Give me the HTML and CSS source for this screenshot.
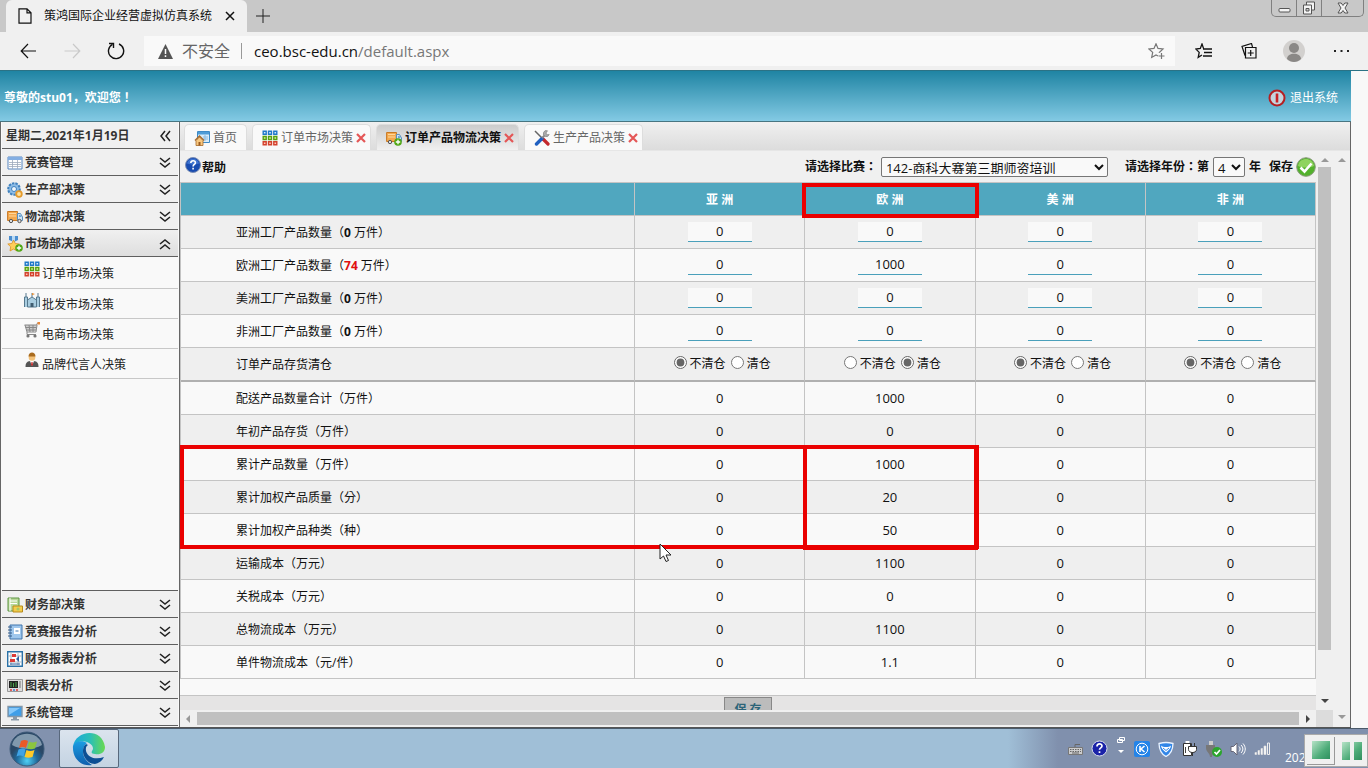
FILE: index.html
```html
<!DOCTYPE html>
<html lang="zh-CN">
<head>
<meta charset="utf-8">
<title>策鸿国际企业经营虚拟仿真系统</title>
<link rel="stylesheet" href="styles.css">
</head>
<body>
<svg class="defs" aria-hidden="true">
  <defs>
    <symbol id="down" viewBox="0 0 12 12"><path d="M1 1l5 4 5-4M1 6l5 4 5-4" fill="none" stroke="#222" stroke-width="1.6"/></symbol>
    <symbol id="up" viewBox="0 0 12 12"><path d="M1 6l5-4 5 4M1 11l5-4 5 4" fill="none" stroke="#222" stroke-width="1.6"/></symbol>
    <symbol id="left" viewBox="0 0 12 12"><path d="M6 1L2 6l4 5M11 1L7 6l4 5" fill="none" stroke="#222" stroke-width="1.5"/></symbol>
    <symbol id="close" viewBox="0 0 10 10"><path d="M1 1l8 8M9 1L1 9" stroke="#e45656" stroke-width="2.2"/></symbol>
    <symbol id="grid" viewBox="0 0 16 16"><g fill="#d5e9ff" stroke="#1f78c8" stroke-width="1.4"><path d="M1.2 1.2h3v3h-3zM6.5 1.2h3v3h-3zM11.8 1.2h3v3h-3z"/></g><g fill="#d7f3a5" stroke="#56a010" stroke-width="1.4"><path d="M1.2 6.5h3v3h-3zM6.5 6.5h3v3h-3zM11.8 6.5h3v3h-3z"/></g><g fill="#ffc5b8" stroke="#d3412c" stroke-width="1.4"><path d="M1.2 11.8h3v3h-3zM6.5 11.8h3v3h-3zM11.8 11.8h3v3h-3z"/></g></symbol>
    <symbol id="truck" viewBox="0 0 16 16"><path d="M.6 2.500h9.900v9H.6z" fill="#f4a94e" stroke="#c97822"/><path d="M2 4.500h7M2 7h7" stroke="#ffd79c"/><path d="M10.500 4.500h3l2 3.500v3.500h-5z" fill="#cfe3f4" stroke="#5a8fbd"/><path d="M12 6h1.500l1 2H12z" fill="#6aa7d8"/><circle cx="4" cy="12" r="1.700" fill="#ddd" stroke="#555"/><circle cx="12.500" cy="12" r="1.700" fill="#ddd" stroke="#555"/></symbol>
    <symbol id="plus" viewBox="0 0 8 8"><circle cx="4" cy="4" r="3.800" fill="#4fa612"/><path d="M4 1.800v4.400M1.800 4h4.400" stroke="#fff" stroke-width="1.300"/></symbol>
  </defs>
</svg>

<header class="browser">
  <div class="tabstrip">
    <div class="btab">
      <svg width="14" height="16" viewBox="0 0 14 16"><path d="M1 .8h8l4 4v10.400H1zM9 .8v4h4" fill="none" stroke="#111" stroke-width="1.200"/></svg>
      <span class="btitle">策鸿国际企业经营虚拟仿真系统</span>
      <button class="plain" aria-label="关闭标签页"><svg width="10" height="10" viewBox="0 0 10 10"><path d="M1 1l8 8M9 1L1 9" stroke="#111" stroke-width="1.500"/></svg></button>
    </div>
    <button class="plain newtab" aria-label="新建标签页"><svg width="14" height="14" viewBox="0 0 14 14"><path d="M7 0v14M0 7h14" stroke="#222"/></svg></button>
    <div class="winbtns">
      <button aria-label="最小化"><svg width="13" height="12" viewBox="0 0 13 12"><rect x="1" y="6.500" width="11" height="3.500" rx="1" fill="#f4f4f4" stroke="#555"/></svg></button>
      <button aria-label="还原"><svg width="14" height="14" viewBox="0 0 14 14"><path d="M4.500 1h8v8h-8z" fill="#f4f4f4" stroke="#555"/><path d="M1.500 4h8v9h-8z" fill="#f4f4f4" stroke="#555"/><path d="M4 7.500h3v2.500H4z" fill="#ccc" stroke="#555"/></svg></button>
      <button class="wide" aria-label="关闭"><svg width="12" height="12" viewBox="0 0 12 12"><path d="M1 1h3.200L6 3.500 7.800 1H11L8 6l3 5H7.800L6 8.500 4.200 11H1l3-5z" fill="#f4f4f4" stroke="#555"/></svg></button>
    </div>
  </div>
  <div class="navbar">
    <button class="plain nav1" aria-label="后退"><svg width="17" height="16" viewBox="0 0 17 16"><path d="M16 8H1.500M8 1L1.200 8 8 15" fill="none" stroke="#111" stroke-width="1.200"/></svg></button>
    <button class="plain nav2" aria-label="前进"><svg width="17" height="16" viewBox="0 0 17 16"><path d="M.5 8h15M9 1l6.800 7L9 15" fill="none" stroke="#c9c9c9" stroke-width="1.200"/></svg></button>
    <button class="plain nav3" aria-label="刷新"><svg width="18" height="18" viewBox="0 0 18 18"><path d="M5.500 2.300A7.600 7.600 0 1 0 12 2" fill="none" stroke="#111" stroke-width="1.400"/><path d="M2 1.500h4.500V6" fill="none" stroke="#111" stroke-width="1.400"/></svg></button>
    <div class="address">
      <svg width="15" height="15" viewBox="0 0 15 15"><path d="M7.500 0L15 15H0z" fill="#555"/><path d="M7.500 5v5M7.500 11.300v1.700" stroke="#fff" stroke-width="1.500"/></svg>
      <span class="insecure">不安全</span><span class="bar"></span>
      <span class="url">ceo.bsc-edu.cn<i>/default.aspx</i></span>
      <svg class="fav" width="17" height="16" viewBox="0 0 17 16"><path d="M12 9.500l-.5-.2L15 6l-5-.6L8 .8 6 5.400l-5 .6 3.700 3.400-1 5L8 12l2 1M13.500 10v6M10.500 13h6" fill="none" stroke="#777" stroke-width="1.200"/></svg>
    </div>
    <div class="tools">
      <svg width="17" height="16" viewBox="0 0 17 16"><path d="M8 5.400h.5L7 1 5.300 5.400 .8 6l3.400 3.400-1 5L7 12M8 6h9M9 9.500h8M8 13h9" fill="none" stroke="#111" stroke-width="1.300"/></svg>
      <svg width="16" height="16" viewBox="0 0 16 16"><path d="M4.500 4.500h10.500v10.500H4.500zM9.700 7v6M6.700 10h6M4 12.500L1 3.500l9.500-3L11.500 4" fill="none" stroke="#111" stroke-width="1.200"/></svg>
      <svg width="22" height="22" viewBox="0 0 22 22"><circle cx="11" cy="11" r="11" fill="#d2d0ce"/><circle cx="11" cy="8" r="5" fill="#8a8886"/><path d="M4 19c0-7 14-7 14 0-4 4-10 4-14 0" fill="#8a8886"/></svg>
      <svg width="15" height="4" viewBox="0 0 15 4"><path d="M0 1h2v2H0zM6.500 1h2v2h-2zM13 1h2v2h-2z" fill="#222"/></svg>
    </div>
  </div>
</header>

<div class="page">
  <div class="banner">
    <strong>尊敬的stu01，欢迎您<span class="mid">！</span></strong>
    <a href="#"><svg width="18" height="18" viewBox="0 0 18 18"><circle cx="9" cy="9" r="7.500" fill="#c4d3dc" stroke="#b51f22" stroke-width="2"/><path d="M9 4.500v9" stroke="#c92125" stroke-width="2.600"/></svg><span>退出系统</span></a>
  </div>
  <div class="workspace">
    <nav class="sidebar">
      <div class="date"><span>星期二,2021年1月19日</span><svg width="12" height="12"><use href="#left"/></svg></div>
      <button class="group"><svg width="16" height="16" viewBox="0 0 16 16"><path d="M1 2h14v12H1z" fill="#fff" stroke="#5686c0"/><path d="M1 2h14v3H1z" fill="#83aee2"/><path d="M2 7.500h12M2 9.500h12M2 11.500h12M5.500 5v9M10.500 5v9" stroke="#9daabb" stroke-width=".8"/></svg><span>竞赛管理</span><svg width="12" height="12"><use href="#down"/></svg></button>
      <button class="group"><svg width="16" height="16" viewBox="0 0 16 16"><circle cx="7" cy="7" r="5.800" fill="#8dbce6" stroke="#3f80bd" stroke-width="2" stroke-dasharray="2.500 1"/><circle cx="7" cy="7" r="2.500" fill="#eef6fc" stroke="#3f80bd"/><circle cx="12" cy="12" r="2.800" fill="#ffe1a0" stroke="#e59b2b" stroke-width="1.800"/></svg><span>生产部决策</span><svg width="12" height="12"><use href="#down"/></svg></button>
      <button class="group"><svg width="16" height="16"><use href="#truck"/></svg><span>物流部决策</span><svg width="12" height="12"><use href="#down"/></svg></button>
      <button class="group open"><svg width="16" height="16" viewBox="0 0 16 16"><path d="M2 0h9v4L7 6 2 4z" fill="#4b8ed0"/><path d="M5 0h3v5H5z" fill="#b8d9f4"/><path d="M6.500 4l1.800 3.500 4 .5-3 2.800.8 4.200-3.600-2L3 15l.7-4.200L.8 8l4-.5z" fill="#ffce59" stroke="#dc9122" stroke-width=".8"/><use href="#plus" x="8" y="8" width="8" height="8"/></svg><span>市场部决策</span><svg width="12" height="12"><use href="#up"/></svg></button>
      <ul class="submenu">
        <li><svg width="16" height="16"><use href="#grid"/></svg><a href="#">订单市场决策</a></li>
        <li><svg width="16" height="16" viewBox="0 0 16 16"><path d="M.5 15V5h3v10M12.500 15V5h3v10M3.500 15V8l4.500-3 4.500 3v7z" fill="#a9cde0" stroke="#56788d"/><path d="M6.500 15v-4h3v4z" fill="#405d70"/><path d="M2 5V1M14 5V1M8 5V1" stroke="#56788d"/><path d="M8 1l3 1-3 1.200z" fill="#e58c32"/></svg><a href="#">批发市场决策</a></li>
        <li><svg width="16" height="16" viewBox="0 0 16 16"><path d="M1 3h12l-1.500 6H3z" fill="#ccc"/><path d="M.5 3h12l1-2H16M1 3l2 7h9l1-7M3 10v2.500h9M1.500 5.500h11M2 8h10M5 3l1 7M9 3v7" fill="none" stroke="#888"/><circle cx="4" cy="14" r="1.600" fill="#777"/><circle cx="11" cy="14" r="1.600" fill="#777"/><path d="M13.500 0H16v2.500h-2.500z" fill="#e7883b"/></svg><a href="#">电商市场决策</a></li>
        <li><svg width="16" height="16" viewBox="0 0 16 16"><path d="M1.500 15c0-5 2-6 6.500-6s6.500 1 6.500 6z" fill="#555"/><path d="M6 9h4l-2 5z" fill="#fff"/><path d="M7.500 10h1l.5 3-1 1-1-1z" fill="#c62626"/><circle cx="8" cy="5.500" r="3.300" fill="#f3c27a"/><path d="M4.500 4.500C4.500-1 11.500-1 11.500 4.500z" fill="#a96b1e"/></svg><a href="#">品牌代言人决策</a></li>
      </ul>
      <div class="bottom">
        <button class="group"><svg width="16" height="16" viewBox="0 0 16 16"><path d="M1 1h11v13H1z" fill="#b8d99a" stroke="#5c9440"/><path d="M3 4h7M3 6.500h7M3 1v13" stroke="#fff"/><path d="M6 9h9.500v6H6z" fill="#f3cd4c" stroke="#b98b1c"/><circle cx="11" cy="12" r="1.500" fill="#a9c963"/></svg><span>财务部决策</span><svg width="12" height="12"><use href="#down"/></svg></button>
        <button class="group"><svg width="16" height="16" viewBox="0 0 16 16"><path d="M3 1h12v14H3z" fill="#9fc7ed" stroke="#3f74ad"/><path d="M7 4h6v6H7z" fill="#fff"/><path d="M8.500 7h3" stroke="#3f74ad"/><path d="M1 3h4M1 6h4M1 9h4M1 12h4" stroke="#345a86"/></svg><span>竞赛报告分析</span><svg width="12" height="12"><use href="#down"/></svg></button>
        <button class="group"><svg width="16" height="16" viewBox="0 0 16 16"><path d="M.7.7h14.600v14.600H.7z" fill="#fff" stroke="#2a72a8" stroke-width="1.400"/><path d="M4 1v14M11 1v14M1 5h14M1 11h14" stroke="#a9b7c5"/><path d="M5 3h4v3H5zM3 8h5v3H3z" fill="#dc3a36"/><path d="M9 8l3-3v6z" fill="#2d5f9d"/><path d="M3 13h10" stroke="#2d5f9d"/></svg><span>财务报表分析</span><svg width="12" height="12"><use href="#down"/></svg></button>
        <button class="group"><svg width="16" height="16" viewBox="0 0 16 16"><path d="M.5 1.500h15v12H.5z" fill="#ddd" stroke="#999"/><path d="M2 3h9v7H2z" fill="#222"/><path d="M4 4v5M6.500 5v4M9 4v5" stroke="#49a34b"/><path d="M13 3v7" stroke="#777"/><path d="M3 12h2M9 12h2" stroke="#d33" stroke-width="1.500"/><path d="M6 12h2" stroke="#37c" stroke-width="1.500"/></svg><span>图表分析</span><svg width="12" height="12"><use href="#down"/></svg></button>
        <button class="group"><svg width="16" height="16" viewBox="0 0 16 16"><path d="M1 1.500h14v10H1z" fill="#3f9ee8" stroke="#8497a8" stroke-width="1.400"/><path d="M2 10V3h11z" fill="#86c8fa"/><path d="M6 12h4v2h2v1.500H4V14h2z" fill="#8999a8"/></svg><span>系统管理</span><svg width="12" height="12"><use href="#down"/></svg></button>
      </div>
    </nav>

    <main class="content">
      <div class="tabs">
        <button class="tab"><svg width="16" height="16" viewBox="0 0 16 16"><path d="M3.500 1.500h12v11h-12z" fill="#d8ecfb" stroke="#3e8ac6"/><path d="M4 2h11v2.500H4z" fill="#4f9cd7"/><path d="M9 7h5M9 9h5M11 5v6" stroke="#8dbbe0"/><path d="M1 10.500L5.500 6l4.500 4.500" fill="none" stroke="#a66a2c" stroke-width="1.500"/><path d="M2 10.500L5.500 7 9 10.500v5H2z" fill="#f7c77f" stroke="#a66a2c" stroke-width=".8"/><path d="M4.500 12h2v3.500h-2z" fill="#9b5a20"/></svg><span>首页</span></button>
        <button class="tab closable"><svg width="16" height="16"><use href="#grid"/></svg><span>订单市场决策</span><svg width="10" height="10"><use href="#close"/></svg></button>
        <button class="tab closable active"><svg width="16" height="16" viewBox="0 0 16 16"><use href="#truck" width="16" height="16"/><use href="#plus" x="8" y="8" width="8" height="8"/></svg><span>订单产品物流决策</span><svg width="10" height="10"><use href="#close"/></svg></button>
        <button class="tab closable"><svg width="16" height="16" viewBox="0 0 16 16"><path d="M1 1l7 7" stroke="#666" stroke-width="1.500"/><path d="M9 9l5 5" stroke="#c3272b" stroke-width="3.200" stroke-linecap="round"/><path d="M2.500 14L8 8.500" stroke="#1f5fc0" stroke-width="3.400" stroke-linecap="round"/><path d="M8 8l3.500-3.500" stroke="#888" stroke-width="1.800"/><path d="M13.500.8a3 3 0 1 0 1.700 3.700L13 4.800 12 3z" fill="#aaa" stroke="#777" stroke-width=".6"/></svg><span>生产产品决策</span><svg width="10" height="10"><use href="#close"/></svg></button>
      </div>
      <div class="frame">
        <div class="pane">
          <div class="filters">
            <button class="plain help"><svg width="16" height="16" viewBox="0 0 16 16"><circle cx="8" cy="8" r="7.500" fill="#184cb0" stroke="#7c8fb5"/><path d="M2 6.500C3 0 13 0 14 6.500 10 8 6 8 2 6.500" fill="#3f74cf"/><path d="M5.800 6c0-3 4.600-3 4.600-.3 0 1.800-2.300 1.800-2.300 3.800M8.100 10.800v1.700" fill="none" stroke="#fff" stroke-width="1.600"/></svg><span>帮助</span></button>
            <label class="l1" for="match">请选择比赛<span class="mid">：</span></label>
            <select id="match"><option>142-商科大赛第三期师资培训</option></select>
            <label class="l2" for="year">请选择年份<span class="mid">：</span>第</label>
            <select id="year"><option>4</option></select>
            <span class="unit">年</span>
            <button class="plain save"><span>保存</span><svg width="20" height="20" viewBox="0 0 20 20"><circle cx="10" cy="10" r="9.300" fill="#52b12c" stroke="#8a9a7c"/><path d="M2 9C3-.5 17-.5 18 9 13 11 7 11 2 9" fill="#8fd35f"/><path d="M4.500 10.500l4 4 7-8" fill="none" stroke="#fff" stroke-width="2.600"/></svg></button>
          </div>
          <table class="grid">
            <thead><tr><th></th><th>亚 洲</th><th class="flag">欧 洲</th><th>美 洲</th><th>非 洲</th></tr></thead>
            <tbody>
              <tr><td>亚洲工厂产品数量（<b>0</b> 万件）</td><td><input type="text" aria-label="亚洲工厂到亚洲" value="0"></td><td><input type="text" aria-label="亚洲工厂到欧洲" value="0"></td><td><input type="text" aria-label="亚洲工厂到美洲" value="0"></td><td><input type="text" aria-label="亚洲工厂到非洲" value="0"></td></tr>
              <tr><td>欧洲工厂产品数量（<b class="red">74</b> 万件）</td><td><input type="text" aria-label="欧洲工厂到亚洲" value="0"></td><td><input type="text" aria-label="欧洲工厂到欧洲" value="1000"></td><td><input type="text" aria-label="欧洲工厂到美洲" value="0"></td><td><input type="text" aria-label="欧洲工厂到非洲" value="0"></td></tr>
              <tr><td>美洲工厂产品数量（<b>0</b> 万件）</td><td><input type="text" aria-label="美洲工厂到亚洲" value="0"></td><td><input type="text" aria-label="美洲工厂到欧洲" value="0"></td><td><input type="text" aria-label="美洲工厂到美洲" value="0"></td><td><input type="text" aria-label="美洲工厂到非洲" value="0"></td></tr>
              <tr><td>非洲工厂产品数量（<b>0</b> 万件）</td><td><input type="text" aria-label="非洲工厂到亚洲" value="0"></td><td><input type="text" aria-label="非洲工厂到欧洲" value="0"></td><td><input type="text" aria-label="非洲工厂到美洲" value="0"></td><td><input type="text" aria-label="非洲工厂到非洲" value="0"></td></tr>
              <tr class="stock"><td>订单产品存货清仓</td>
                <td><div class="radios"><label><input type="radio" name="asia" checked>不清仓</label><label><input type="radio" name="asia">清仓</label></div></td>
                <td><div class="radios"><label><input type="radio" name="europe">不清仓</label><label><input type="radio" name="europe" checked>清仓</label></div></td>
                <td><div class="radios"><label><input type="radio" name="america" checked>不清仓</label><label><input type="radio" name="america">清仓</label></div></td>
                <td><div class="radios"><label><input type="radio" name="africa" checked>不清仓</label><label><input type="radio" name="africa">清仓</label></div></td></tr>
            </tbody>
            <tbody class="alt">
              <tr><td>配送产品数量合计（万件）</td><td>0</td><td>1000</td><td>0</td><td>0</td></tr>
              <tr><td>年初产品存货（万件）</td><td>0</td><td>0</td><td>0</td><td>0</td></tr>
            </tbody>
            <tbody class="alt flagged">
              <tr><td class="flag-row">累计产品数量（万件）</td><td>0</td><td class="flag-col">1000</td><td>0</td><td>0</td></tr>
              <tr><td>累计加权产品质量（分）</td><td>0</td><td>20</td><td>0</td><td>0</td></tr>
              <tr><td>累计加权产品种类（种）</td><td>0</td><td>50</td><td>0</td><td>0</td></tr>
            </tbody>
            <tbody>
              <tr><td>运输成本（万元）</td><td>0</td><td>1100</td><td>0</td><td>0</td></tr>
              <tr><td>关税成本（万元）</td><td>0</td><td>0</td><td>0</td><td>0</td></tr>
              <tr><td>总物流成本（万元）</td><td>0</td><td>1100</td><td>0</td><td>0</td></tr>
              <tr><td>单件物流成本（元/件）</td><td>0</td><td>1.1</td><td>0</td><td>0</td></tr>
            </tbody>
          </table>
          <div class="actions"><button>保 存</button></div>
        </div>
        <div class="vbar"><i class="arrow up dim"></i><i class="thumb"></i><i class="arrow down"></i></div>
        <div class="hbar"><i class="arrow west dim"></i><i class="thumb"></i><i class="arrow east"></i></div>
        <div class="corner"></div>
        <div class="vbar outer"><i class="arrow up dim"></i><i class="arrow down dim"></i></div>
      </div>
    </main>
  </div>
</div>

<footer class="taskbar">
  <button class="plain start" aria-label="开始"><svg width="36" height="36" viewBox="0 0 36 36"><defs><radialGradient id="orb" cy=".85"><stop offset="0" stop-color="#4fd0f5"/><stop offset=".6" stop-color="#1f6a9c"/><stop offset="1" stop-color="#2a4866"/></radialGradient></defs><circle cx="18" cy="18" r="17" fill="url(#orb)" stroke="#3d5a78"/><path d="M3 14C6-1 30-1 33 14 24 19 12 19 3 14" fill="#c9dce8" opacity=".55"/><path d="M12 10c3-1.500 5-1 7 0l-2 7c-2-1-4-1.500-7 0z" fill="#ea5a28"/><path d="M20 10.500c3 1.500 5 1 8 0l-2 7c-3 1-5 1-8 0z" fill="#8cc63f"/><path d="M9.500 18.500c3-1.500 5-1 7 0l-2 7c-2-1-4-1.500-7 0z" fill="#3fa3e6"/><path d="M17.500 19c3 1.500 5 1 8 0l-2 7c-3 1-5 1-8 0z" fill="#fdc928"/></svg></button>
  <button class="edge" aria-label="Microsoft Edge"><svg width="34" height="34" viewBox="0 0 34 34"><defs><linearGradient id="eg"><stop offset="0" stop-color="#1aa6dd"/><stop offset=".55" stop-color="#2bc0b4"/><stop offset="1" stop-color="#69d94f"/></linearGradient><linearGradient id="eb" x2="0" y2="1"><stop offset="0" stop-color="#1b9de2"/><stop offset="1" stop-color="#0f5fae"/></linearGradient></defs><path d="M1 15C3-2 30-5 33 15c0 6-5 8-10 7-3 0-4-1-3-3 2-2 1-6-3-8-6-3-14-1-16 4" fill="url(#eg)"/><path d="M1 14c2-5 9-6 14-3-6 4-6 16 5 22C10 35 0 27 1 14" fill="url(#eb)"/><path d="M14 12c-7 6-1 20 9 20 4-1 7-3 9-7-8 3-16 1-18-6-.4-3 0-5 2-6z" fill="#0d4f94"/></svg></button>
  <div class="tray">
    <svg width="15" height="12" viewBox="0 0 15 12"><path d="M.5 4.500h14v7H.5z" fill="#ccc" stroke="#777"/><path d="M2 6.500h11M2 8.500h11" stroke="#666" stroke-dasharray="1.500 1"/><path d="M4 10h7M7 4V1.500h5" fill="none" stroke="#666"/></svg>
    <svg width="17" height="17" viewBox="0 0 17 17"><circle cx="8.500" cy="8.500" r="7.500" fill="#1a23a8" stroke="#d8dcec"/><path d="M6 6.500c0-3.500 5-3.500 5-.5 0 2-2.500 1.700-2.500 3.700M8.500 11.300v1.800" fill="none" stroke="#fff" stroke-width="1.700"/></svg>
    <svg class="gap" width="10" height="19" viewBox="0 0 10 19"><path d="M3.500 1.500h5v3h-5zM1.500 3.500h5v3h-5z" fill="#8090ad" stroke="#fff"/><path d="M2 14h6l-3 3z" fill="#fff"/></svg>
    <svg width="16" height="16" viewBox="0 0 16 16"><rect width="16" height="16" rx="2" fill="#2484e8"/><circle cx="8" cy="8" r="5.800" fill="none" stroke="#fff"/><path d="M6 5v6M10.500 5L7 8l3.500 3" fill="none" stroke="#fff" stroke-width="1.600"/></svg>
    <svg width="16" height="16" viewBox="0 0 16 16"><path d="M8 1.500c3 0 5 .5 7 1-.2 7-2 10.500-7 13C3 13 1.200 9.500 1 2.500c2-.5 4-1 7-1z" fill="#3186e8" stroke="#eaf3ff" stroke-width="1.300"/><path d="M3 4.500c2 2 8 2 10 0 0 2-2 5-5 7-3-2-5-5-5-7z" fill="#fff"/><path d="M5 7l3 2.500L11 7" fill="none" stroke="#3186e8"/></svg>
    <svg width="16" height="16" viewBox="0 0 16 16"><path d="M1.500 2.500h8v12h-8z" fill="#fff" stroke="#333"/><path d="M3.500 1h4" stroke="#fff" stroke-width="2"/><path d="M3.500 12V6" stroke="#444"/><path d="M6.500 5.500h8v3c0 2-2 3-4 3s-4-1-4-3zM8.500 5.500V2M12.500 5.500V2M10.500 11v4" fill="#fff" stroke="#333"/></svg>
    <svg width="16" height="16" viewBox="0 0 16 16"><path d="M3 0h4v4H3z" fill="#ccc"/><path d="M0 4h9v4c0 4-3 5-3 8H4C4 12 0 11 0 7z" fill="#777"/><circle cx="11" cy="11" r="5" fill="#2ba52d"/><path d="M8.500 11l2 2 3.500-4" fill="none" stroke="#fff" stroke-width="1.700"/></svg>
    <svg width="16" height="14" viewBox="0 0 16 14"><path d="M1 4.500h2.500L7 1v12L3.500 9.500H1z" fill="#fff" stroke="#667"/><path d="M9 4.500c1.500 1.500 1.500 3.500 0 5M11 3c2.500 2.500 2.500 5.500 0 8M13 1.500c3 3.500 3 7.500 0 11" fill="none" stroke="#fff"/></svg>
    <svg width="16" height="13" viewBox="0 0 16 13"><path d="M1 10.500h1.500v2H1zM4 8.500h1.500v4H4zM7 6.500h1.500v6H7zM10 4h2v8.500h-2z" fill="#fff" stroke="#ddd" stroke-width=".7"/><path d="M13.500 1h2v11.500h-2z" fill="none" stroke="#eee"/></svg>
  </div>
  <span class="clock">202</span>
  <div class="recorder">
    <button aria-label="停止"><svg width="20" height="20" viewBox="0 0 20 20"><defs><linearGradient id="gr" x2="1" y2="1"><stop offset="0" stop-color="#b5e2c6"/><stop offset=".6" stop-color="#4eac79"/><stop offset="1" stop-color="#2f8f5e"/></linearGradient></defs><path d="M1 1h18v18H1z" fill="url(#gr)"/></svg></button>
    <button aria-label="暂停"><svg width="20" height="20" viewBox="0 0 20 20"><path d="M0 1h8v18H0zM12 1h8v18h-8z" fill="url(#gr)"/></svg></button>
  </div>
</footer>
<svg class="cursor" width="13" height="20" viewBox="0 0 13 20"><path d="M1 1v15l3.500-3 2.500 5.500 2.500-1L7 12h5z" fill="#fff" stroke="#222"/></svg>
</body>
</html>
```
FILE: styles.css
```css
*, *::after { box-sizing: border-box; }
body {
  margin: 0;
  height: 100vh;
  display: flex;
  flex-direction: column;
  overflow: hidden;
  background: #f8f8f8;
  color: #111;
  font: 12px/18px "Open Sans", "Noto Sans CJK SC", sans-serif;
}
button, input, select { font: inherit; color: inherit; }
svg { display: block; flex: none; }
.defs { position: absolute; width: 0; height: 0; }
.plain { border: 0; padding: 0; background: none; }

/* browser chrome */
.browser { flex: none; }
.tabstrip { display: flex; height: 32px; background: #c8c8c8; }
.btab { display: flex; align-items: center; width: 241px; margin-left: 6px; padding: 0 12px; background: #f0f0f0; border-radius: 6px 6px 0 0; }
.btitle { flex: 1; margin-left: 12px; white-space: nowrap; }
.newtab { margin-left: 9px; }
.winbtns { display: flex; height: 17px; margin: 0 4px 0 auto; border: 1px solid #808080; border-top: 0; border-radius: 0 0 5px 5px; }
.winbtns button { display: grid; place-items: center; width: 25px; padding: 0; border: 0; border-right: 1px solid #808080; background: none; }
.winbtns .wide { width: 41px; border-right: 0; }
.navbar { display: flex; align-items: center; height: 39px; padding: 0 19px 0 20px; background: #f0f0f0; border-bottom: 1px solid #2b7285; }
.nav2 { margin-left: 27px; }
.nav3 { margin-left: 26px; }
.address { flex: 1; display: flex; align-items: center; height: 30px; margin-left: 19px; padding: 0 12px 0 14px; background: #f9f9f9; color: #666; font-size: 16px; }
.insecure { margin-left: 9px; }
.bar { width: 1px; height: 16px; margin: 0 12px 0 11px; background: #999; }
.url { font-size: 15px; color: #111; }
.url i { font-style: normal; color: #777; }
.fav { margin-left: auto; margin-right: -2px; }
.tools { display: flex; align-items: center; gap: 29px; padding-left: 20px; }
.tools svg:nth-child(3) { margin-left: -3px; }

/* site */
.page { flex: 1; min-height: 0; display: flex; flex-direction: column; margin-right: 17px; border-bottom: 1px solid #555; }
.banner { flex: none; display: flex; align-items: center; justify-content: space-between; height: 51px; padding: 3px 13px 0 4px; background: linear-gradient(#1f84a3, #83cae4); border-bottom: 1px solid #477581; color: #fff; }
.banner a { display: flex; align-items: center; gap: 4px; color: #fff; text-decoration: none; }
.workspace { flex: 1; min-height: 0; display: flex; border-right: 1px solid #666; }
.sidebar { flex: none; display: flex; flex-direction: column; width: 180px; padding: 0 1px; border: 1px solid #666; border-width: 0 1px; background: #f9f9f9; }
.date, .group { flex: none; display: flex; align-items: center; width: 100%; height: 27px; padding: 2px 7px 0 5px; border: 0; border-bottom: 1px solid #5f5f5f; background: #f0f0f0; color: #333; font-weight: 700; text-align: left; }
.date span, .group span { flex: 1; margin-left: 2px; white-space: nowrap; }
.date span { margin-left: -1px; }
.group.open { background: linear-gradient(#f0f0f0, #dedede); }
.submenu { flex: 1; margin: 0; padding: 0; list-style: none; }
.submenu li { display: flex; gap: 2px; height: 30px; padding: 3px 0 0 22px; border-bottom: 1px solid #c8c8c8; }
.submenu li:first-child { height: 32px; padding-top: 4px; }
.submenu a { margin-top: 4px; color: #222; text-decoration: none; }
.bottom { border-top: 1px solid #5f5f5f; margin-bottom: 1px; }

.content { flex: 1; min-width: 0; display: flex; flex-direction: column; }
.tabs { flex: none; display: flex; align-items: flex-end; gap: 5px; height: 29px; padding-left: 4px; background: linear-gradient(#f0f0f0, #dcdcdc); border-bottom: 1px solid #e6e6e6; }
.tab { display: flex; align-items: center; gap: 3px; height: 26px; padding: 0 9px; border: 1px solid #ddd; border-bottom: 0; border-radius: 5px 5px 0 0; background: #f9f9f9; color: #666; white-space: nowrap; }
.tab.closable { padding-right: 4px; }
.tab.active { background: linear-gradient(#ccc, #f0f0f0); color: #111; font-weight: 700; }
.frame { flex: 1; min-height: 0; display: grid; grid-template: minmax(0, 1fr) 17px / minmax(0, 1fr) 17px 17px; background: #f0f0f0; }
.pane { overflow: hidden; background: #f9f9f9; }
.filters { display: flex; align-items: center; height: 31px; background: #f0f0f0; font-weight: 700; white-space: nowrap; }
.help { display: flex; gap: 1px; margin-left: 5px; }
.help span { padding-top: 2px; }
.mid { font-family: "Noto Sans CJK TC", sans-serif; font-feature-settings: "locl" 0; }
.l1 { margin-left: auto; }
.filters select { height: 20px; margin: 0 4px; padding: 0 0 2px; font-size: 13px; font-weight: 400; background: #f9f9f9; border: 1px solid #767676; border-radius: 2px; }
#match { width: 227px; margin-right: 17px; }
#year { width: 32px; }
.save { display: flex; align-items: center; gap: 3px; margin-left: 8px; }

.grid { width: 100%; table-layout: fixed; border-collapse: separate; border-spacing: 0; border-top: 1px solid #c4c4c4; border-left: 1px solid #c4c4c4; }
.grid th { position: relative; height: 33px; padding: 2px 0 0; background: #50a7bf; color: #fff; border: 1px solid #c4c4c4; border-width: 0 1px 1px 0; }
.grid th:first-child { width: 40%; }
.grid td { height: 33px; padding: 0; border: 1px solid #c4c4c4; border-width: 0 1px 1px 0; text-align: center; font-size: 13px; }
.grid td:first-child { padding: 2px 0 0 55px; text-align: left; font: 12px/18px "Open Sans", "Noto Sans CJK TC", sans-serif; font-feature-settings: "locl" 0; }
.grid tr:nth-child(odd) td { background: #efefef; }
.grid tr:nth-child(even) td { background: #f9f9f9; }
.grid .alt tr:nth-child(odd) td { background: #f9f9f9; }
.grid .alt tr:nth-child(even) td { background: #efefef; }
.grid .stock td { height: 34px; border-bottom: 2px solid #b0b0b0; }
.red { color: #e01010; }
.grid input[type="text"] { display: block; width: 64px; height: 20px; margin: 0 auto; padding: 0 0 2px; border: 0; border-bottom: 1px solid #4aa0bb; background: #f9f9f9; text-align: center; }
.radios { display: flex; justify-content: center; font-size: 12px; }
.radios label { display: flex; align-items: center; }
.radios input { width: 13px; height: 13px; margin: 0 3px 3px 5px; accent-color: #666; }

/* red call-outs drawn over the table */
.flag::after, .flag-row::after, .flag-col::after { content: ""; position: absolute; border: 4px solid #ea0000; pointer-events: none; z-index: 1; }
.flag::after { inset: 0 -4px -3px -3px; }
.flagged { position: relative; }
.flag-row::after { top: -3px; left: -1px; width: calc(70% + 4px); height: calc(100% + 5px); }
.flag-col { position: relative; }
.flag-col::after { top: -3px; left: -2px; right: -3px; height: calc(300% + 9px); }

.actions { display: flex; justify-content: center; height: 40px; margin-top: 16px; padding-top: 1px; border-top: 1px solid #c4c4c4; background: #e5e4e4; }
.actions button { width: 48px; height: 26px; padding: 0; border: 1px solid #888; background: #bcbcbc; color: #2c6478; font-weight: 700; }

.vbar { display: flex; flex-direction: column; align-items: center; padding: 7px 0; gap: 5px; background: #f0f0f0; }
.vbar .thumb { width: 13px; flex: 0 1 483px; background: #c0c0c0; }
.vbar .arrow.down { margin-top: auto; }
.outer { grid-column: 3; grid-row: 1 / 3; padding-bottom: 8px; }
.hbar { grid-column: 1; grid-row: 2; display: flex; align-items: center; gap: 7px; padding: 0 6px; background: #f0f0f0; }
.hbar .thumb { flex: 1; height: 13px; background: #c0c0c0; }
.corner { grid-column: 2; grid-row: 2; background: #dcdcdc; }
.arrow { flex: none; width: 0; height: 0; border: 4px solid transparent; }
.arrow.up { border-top: 0; border-bottom-color: #444; }
.arrow.down { border-bottom: 0; border-top-color: #444; }
.arrow.east { border-right: 0; border-left-color: #444; }
.arrow.west { border-left: 0; border-right-color: #999; }
.arrow.up.dim { border-bottom-color: #999; }
.arrow.down.dim { border-top-color: #999; }

/* desktop taskbar */
.taskbar { flex: none; display: flex; height: 40px; border-top: 1px solid #4a5a6a; background: linear-gradient(90deg, #8292ae 60px, #a0bfd7 118px, #a0bfd7 calc(100% - 360px), #8090ad calc(100% - 310px)); }
.start { margin: 1px 14px 0 9px; }
.edge { display: grid; place-items: center; width: 60px; padding: 0; border: 1px solid #58687c; border-radius: 2px; background: linear-gradient(#dbe4ee, #c4d3e2); }
.tray { display: flex; align-items: center; gap: 8px; margin-left: auto; }
.tray .gap { margin-bottom: 6px; }
.clock { align-self: flex-end; width: 19px; margin: 0 0 1px 15px; overflow: hidden; color: #fff; }
.recorder { display: flex; align-items: center; gap: 3px; width: 64px; height: 33px; margin-top: 5px; padding: 2px; border: 1px solid #aaa; background: #f0f0f0; }
.recorder button { flex: 1; display: grid; place-items: center; height: 28px; padding: 0; border: 0; background: none; }
.recorder button:first-child { border: 1px solid #999; border-width: 0 1px 1px 0; }
.cursor { position: absolute; left: 659px; top: 543px; z-index: 2; }
```
